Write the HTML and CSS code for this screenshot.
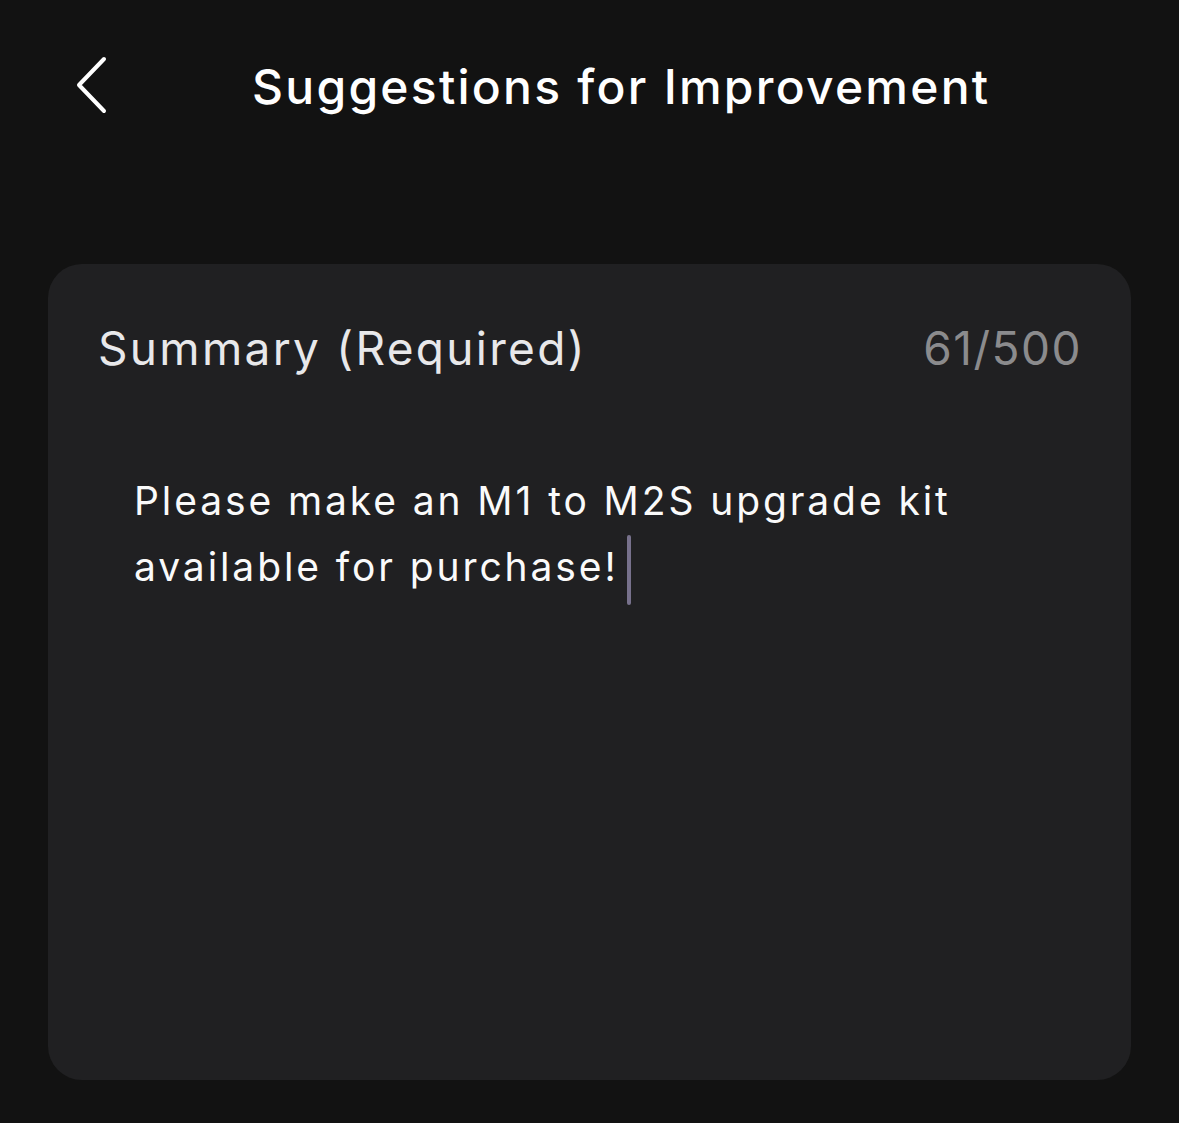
FILE: index.html
```html
<!DOCTYPE html>
<html>
<head>
<meta charset="utf-8">
<link rel="stylesheet" href="styles.css">
</head>
<body>
<div class="screen">
  <header class="nav">
    <button class="back" aria-label="Back">
      <svg width="34" height="58" viewBox="0 0 34 58"><path d="M30 3 L5 29 L30 55" fill="none" stroke="#fff" stroke-width="4" stroke-linecap="round" stroke-linejoin="round"/></svg>
    </button>
    <h1 class="title">Suggestions for Improvement</h1>
  </header>
  <section class="card">
    <div class="card-head">
      <span class="label">Summary (Required)</span>
      <span class="count">61/500</span>
    </div>
    <p class="body">Please make an M1 to M2S upgrade kit<br>available for purchase!<span class="caret"></span></p>
  </section>
</div>
</body>
</html>
```
FILE: styles.css
```css
html, body {
  margin: 0;
  padding: 0;
  background: #121212;
}
body {
  font-family: Inter, "Noto Sans", sans-serif;
  color: #fff;
}
.screen {
  width: 1179px;
  height: 1123px;
  padding: 0 48px;
  box-sizing: border-box;
}
.nav {
  height: 176px;
  display: flex;
  align-items: flex-start;
  padding-top: 56px;
  box-sizing: border-box;
}
.back {
  background: none;
  border: 0;
  padding: 0;
  margin-left: 26px;
  width: 34px;
  height: 58px;
  display: block;
}
.back svg { display: block; }
.title {
  margin: -1px 0 0 144px;
  font-size: 48px;
  font-weight: 500;
  line-height: 64px;
  letter-spacing: 2.25px;
}
.card {
  margin-top: 88px;
  height: 816px;
  background: #202022;
  border-radius: 34px;
  padding: 0 50px;
  box-sizing: border-box;
}
.card-head {
  display: flex;
  justify-content: space-between;
  align-items: center;
  padding-top: 54px;
  height: 60px;
  box-sizing: content-box;
}
.label {
  font-size: 46px;
  font-weight: 400;
  color: #e8e8ea;
  letter-spacing: 2.3px;
}
.count {
  font-size: 46px;
  color: #8b8b8d;
  letter-spacing: 1.5px;
  margin-right: -1px;
}
.body {
  margin: 90px 0 0 36px;
  font-size: 39px;
  line-height: 66px;
  letter-spacing: 2.9px;
  color: #fafafa;
}
.caret {
  display: inline-block;
  width: 4px;
  height: 70px;
  margin: -12px 0 -12px 8px;
  background: #77718c;
  border-radius: 2px;
  vertical-align: middle;
}
```
